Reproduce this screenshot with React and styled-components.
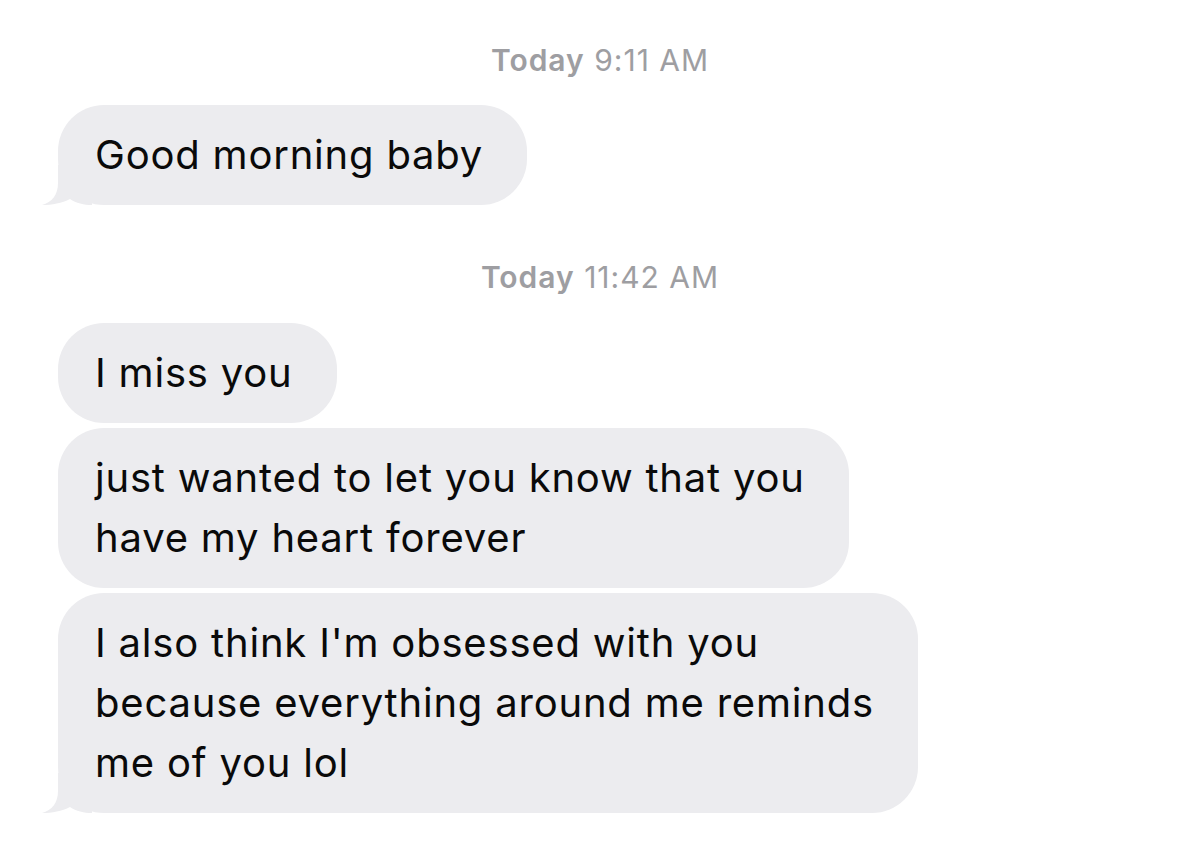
import React from 'react'
import styled, { createGlobalStyle } from 'styled-components'

const GlobalStyle = createGlobalStyle`
  html, body {
    margin: 0;
    padding: 0;
    background: #ffffff;
  }
  body {
    font-family: Inter, "Liberation Sans", Arial, sans-serif;
    -webkit-font-smoothing: antialiased;
  }
`

const Thread = styled.div`
  width: 1200px;
  height: 843px;
  box-sizing: border-box;
  padding: 43px 0 0 58px;
  display: flex;
  flex-direction: column;
  align-items: flex-start;
  overflow: hidden;
`

const Stamp = styled.div`
  align-self: stretch;
  margin-left: -58px;
  margin-top: ${(p) => p.$top || 0}px;
  text-align: center;
  font-size: 30px;
  line-height: 34px;
  color: #9e9ea2;
  letter-spacing: 1px;

  b {
    font-weight: 600;
  }
`

const Group = styled.div`
  display: flex;
  flex-direction: column;
  align-items: flex-start;
  gap: 5px;
  margin-top: ${(p) => p.$top || 0}px;
`

const Bubble = styled.div`
  position: relative;
  box-sizing: border-box;
  padding: 20px 44px 20px 37px;
  background: #ececef;
  border-radius: 46px;
  font-size: 40px;
  line-height: 60px;
  letter-spacing: 0.8px;
  color: #0a0a0a;
  white-space: nowrap;
`

const TailShape = styled.svg`
  position: absolute;
  left: -16px;
  bottom: 0;
  width: 50px;
  height: 40px;
  fill: #ececef;
`

const Tail = () => (
  <TailShape viewBox='0 0 50 40'>
    <path d='M16 0 L16 18 C16 30 10 37 0 40 C10 40 20 38 28 34 C34 38 42 40 50 40 L50 0 Z' />
  </TailShape>
)

const Message = ({ lines, tail }) => (
  <Bubble>
    {lines.map((line, i) => (
      <React.Fragment key={i}>
        {i > 0 && <br />}
        {line}
      </React.Fragment>
    ))}
    {tail && <Tail />}
  </Bubble>
)

const App = () => (
  <>
    <GlobalStyle />
    <Thread>
      <Stamp>
        <b>Today</b> 9:11 AM
      </Stamp>
      <Group $top={28}>
        <Message lines={['Good morning baby']} tail />
      </Group>

      <Stamp $top={55}>
        <b>Today</b> 11:42 AM
      </Stamp>
      <Group $top={29}>
        <Message lines={['I miss you']} />
        <Message
          lines={['just wanted to let you know that you', 'have my heart forever']}
        />
        <Message
          lines={[
            "I also think I'm obsessed with you",
            'because everything around me reminds',
            'me of you lol'
          ]}
          tail
        />
      </Group>
    </Thread>
  </>
)

export default App
